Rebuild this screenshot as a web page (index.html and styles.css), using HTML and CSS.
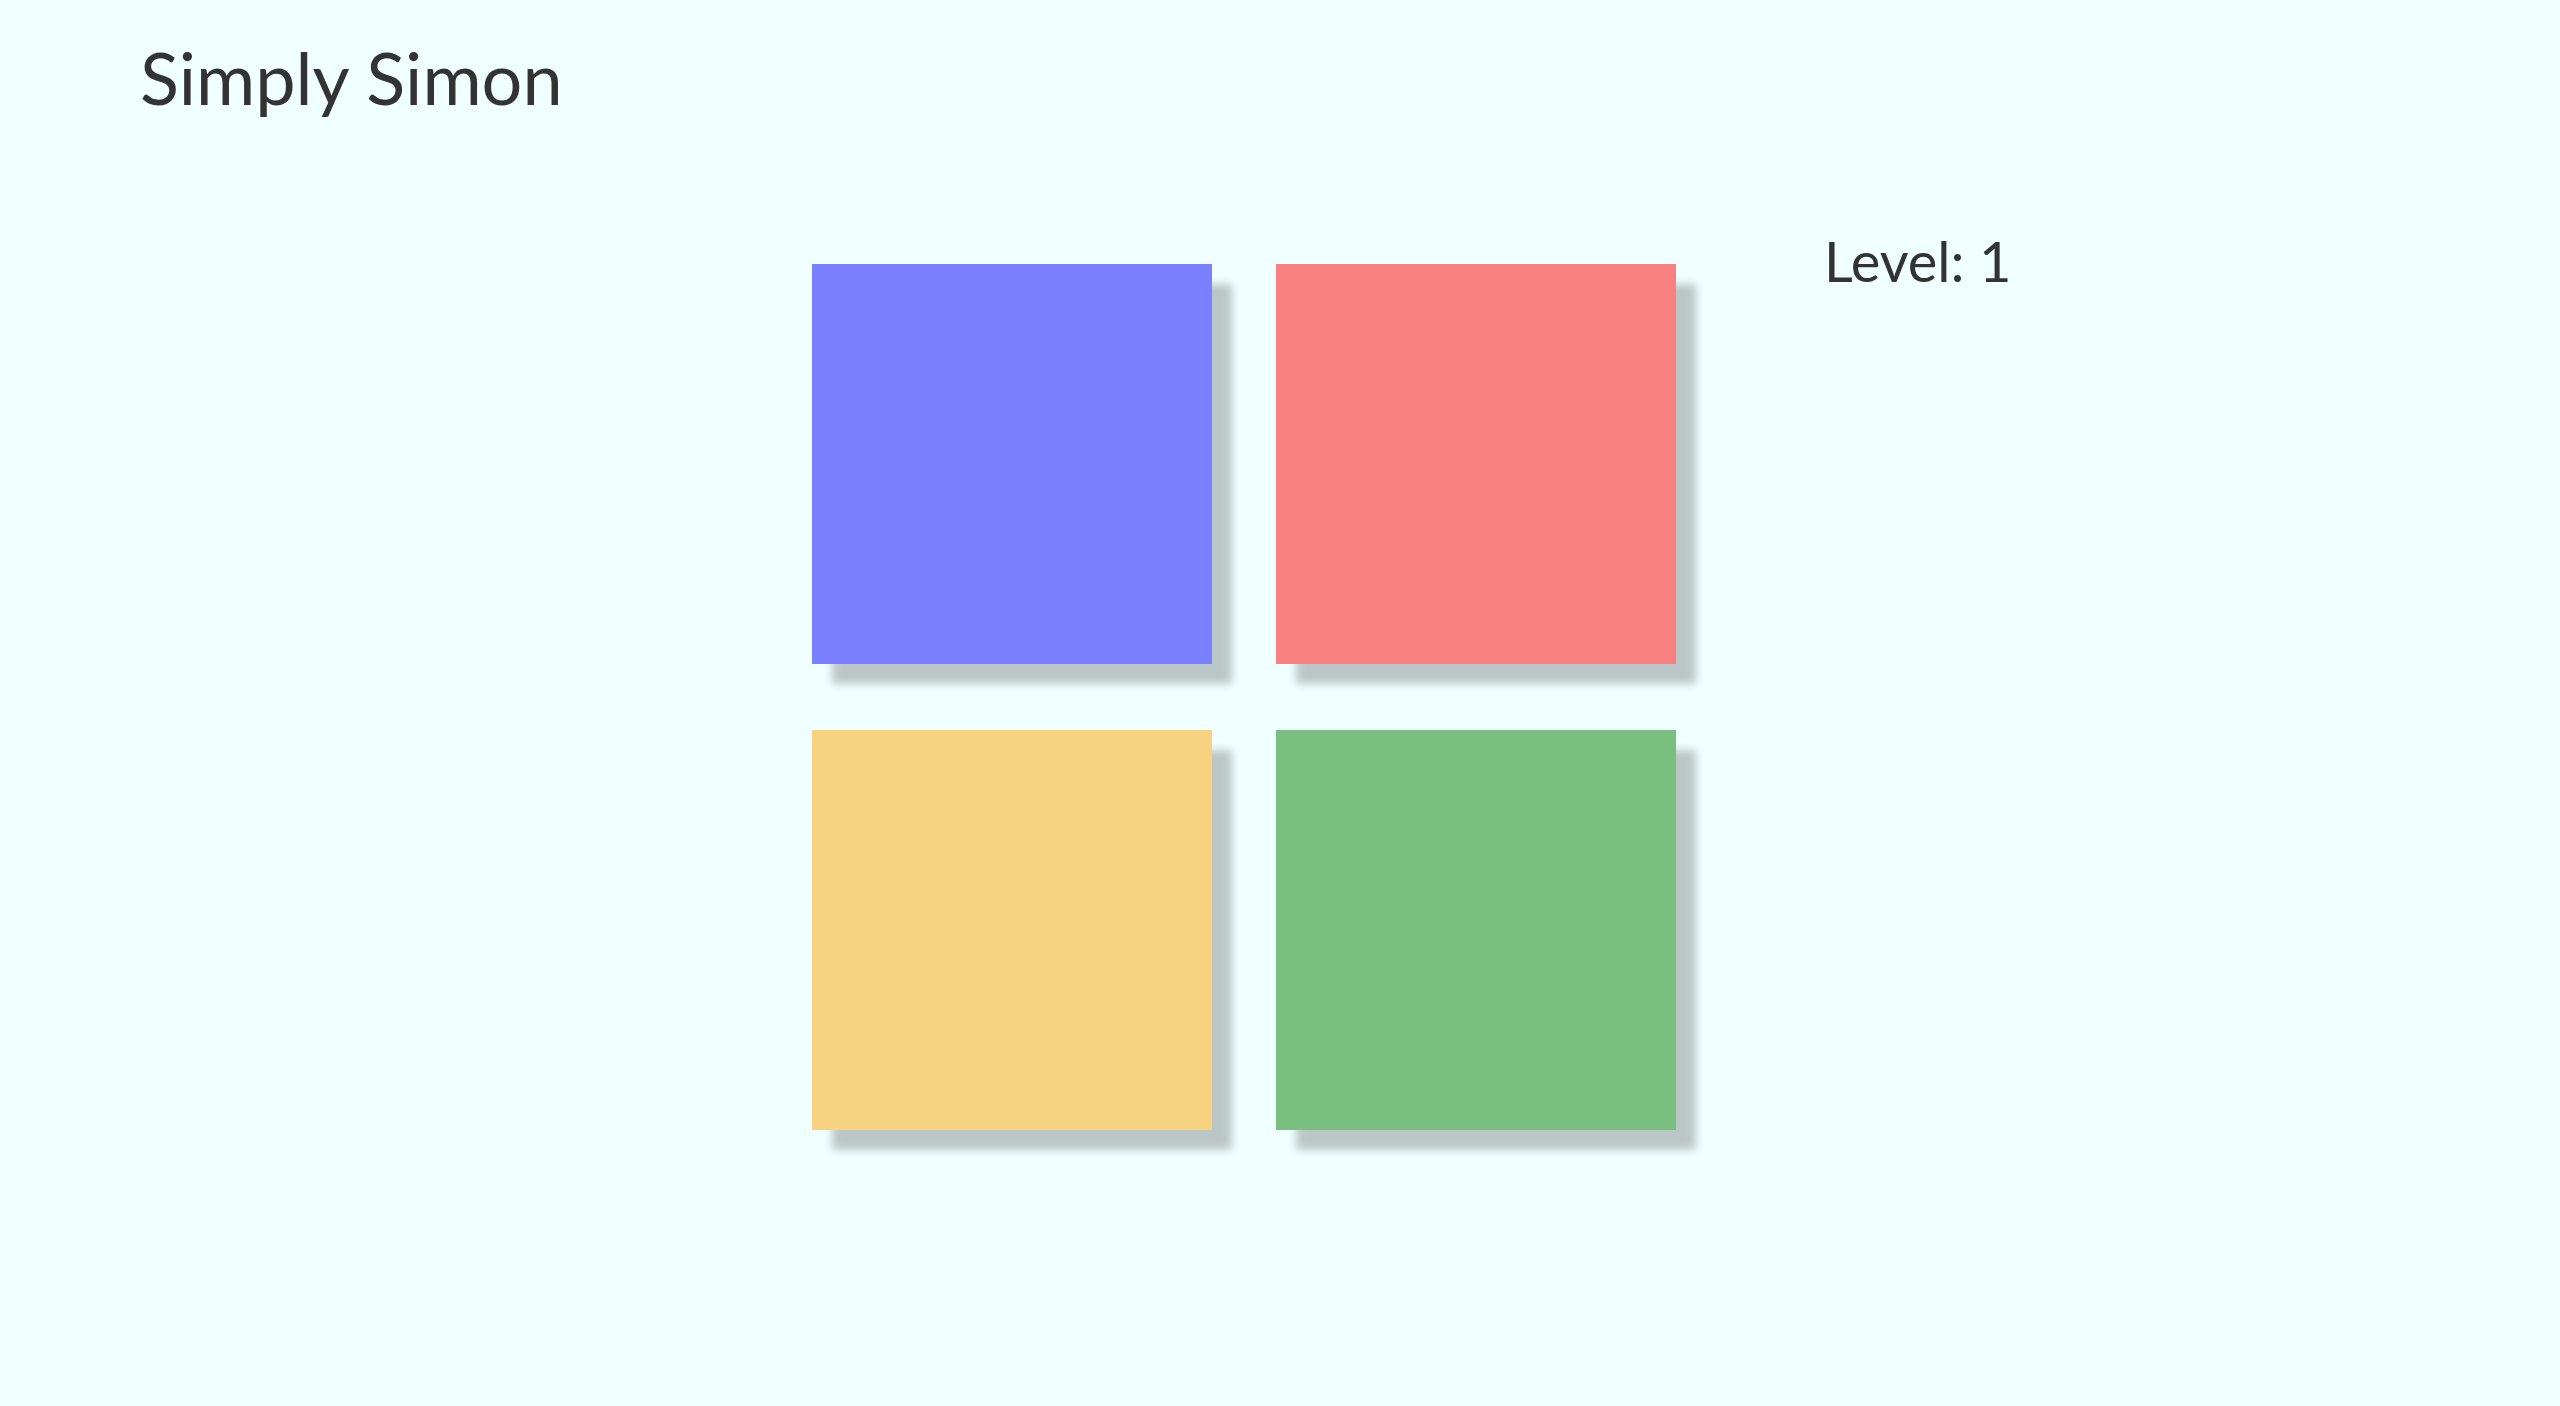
FILE: index.html
```html
<!DOCTYPE html>
<html lang="en">
<head>
    <meta charset="UTF-8">
    <meta name="viewport" content="width=device-width, initial-scale=1.0">
    <title>Simply Simon</title>
    <link rel="stylesheet" href="styles.css">
</head>
<body>
    <h1 class="title">Simply Simon</h1>
    <main class="game">
        <div class="board">
            <div class="pad pad-blue"></div>
            <div class="pad pad-red"></div>
            <div class="pad pad-yellow"></div>
            <div class="pad pad-green"></div>
        </div>
        <p class="level">Level: <span id="level">1</span></p>
    </main>
</body>
</html>
```

FILE: styles.css
```css
body {
    font-family: Lato, "Open Sans", sans-serif;
    background-color: #f0ffff;
    color: #333333;
    margin: 0;
    min-height: 100vh;
}
.title {
    font-size: 72px;
    font-weight: 400;
    line-height: 84px;
    margin: 35px 0 0 140px;
}
.game {
    display: flex;
    align-items: flex-start;
    margin-top: 145px;
    padding-left: 812px;
}
.board {
    display: grid;
    grid-template-columns: 400px 400px;
    grid-template-rows: 400px 400px;
    column-gap: 64px;
    row-gap: 66px;
}
.pad {
    box-shadow: 20px 20px 8px rgba(0, 0, 0, 0.22);
    cursor: pointer;
}
.pad-blue {
    background-color: #7a80ff;
}
.pad-red {
    background-color: #f88080;
}
.pad-yellow {
    background-color: #f7d281;
}
.pad-green {
    background-color: #79c080;
}
.level {
    font-size: 56px;
    margin: -37px 0 0 148px;
}
```
